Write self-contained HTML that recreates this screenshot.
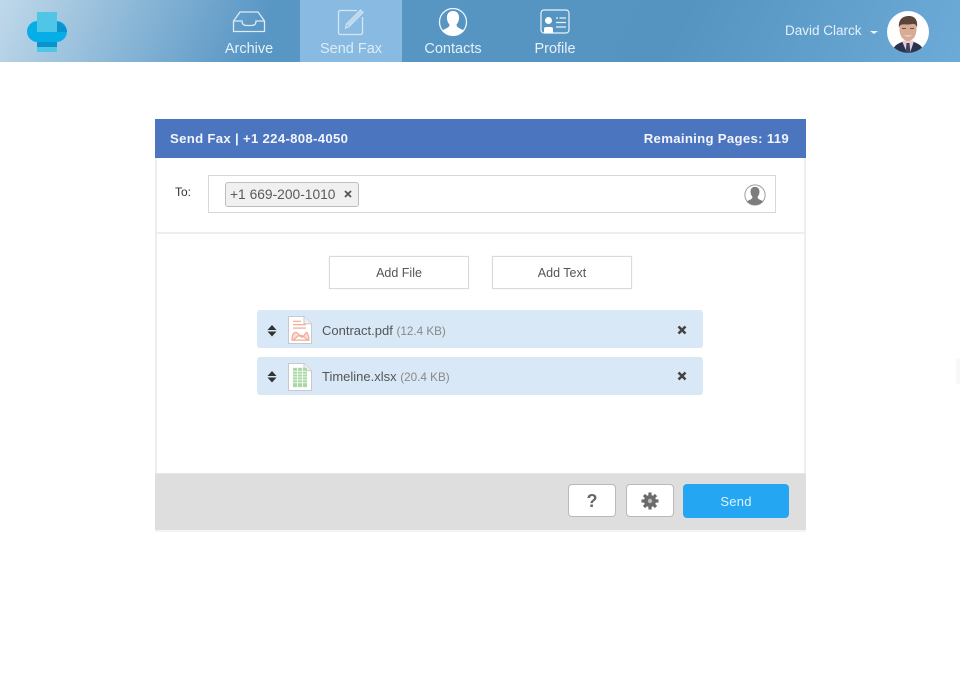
<!DOCTYPE html>
<html><head><meta charset="utf-8"><style>
html,body{margin:0;padding:0;background:#fff}
body{width:960px;height:685px;position:relative;overflow:hidden;font-family:"Liberation Sans",sans-serif}
.a{position:absolute}
.t{position:absolute;white-space:nowrap}
.nav{top:41px;font-size:14.5px;line-height:17px;color:#e6f0f8;text-align:center;width:102px}
.btn{position:absolute;box-sizing:border-box;background:#fff;border:1px solid #dadada;box-shadow:0 0 1px #e4e4e4;text-align:center;font-size:12.5px;color:#555;line-height:32px;height:33px;width:140px;top:256px}
.row{position:absolute;left:257px;width:446px;height:38px;background:#d8e8f6;border-radius:3px}
.fn{position:absolute;left:65px;top:13px;font-size:13px;line-height:15px;color:#555;white-space:nowrap}
.fn span{color:#888;font-size:11.7px}
.sb{position:absolute;box-sizing:border-box;width:48px;height:33px;top:484px;background:#fff;border:1px solid #b9b9b9;border-radius:4px}
</style></head><body>
<div class="a" style="left:0;top:0;width:960px;height:62px;background:linear-gradient(115deg,#c0d9ea 0%,#5896c4 28%,#5593c1 70%,#6caad8 100%)"></div>
<div class="a" style="left:300px;top:0;width:102px;height:62px;background:#89bbe2"></div>

<svg class="a" style="left:20px;top:5px" width="55" height="50" viewBox="0 0 55 50">
<rect x="7" y="16" width="40" height="21" rx="10.500" fill="#05aee6"/>
<path d="M37 17 C41 17.500 46 20 47 27 L37 27Z" fill="#0b93cf"/>
<rect x="17" y="37" width="20" height="5" fill="#0a93cb"/>
<rect x="17" y="42" width="20" height="5" fill="#4fc6e6"/>
<rect x="17" y="7" width="20" height="20" fill="#4fc6e6"/>
</svg>

<svg class="a" style="left:232px;top:10px" width="34" height="24" viewBox="0 0 34 24" fill="none" stroke="#dcebf5" stroke-width="1.300">
<path d="M1.500 11 L8 2 H26 L32.500 11 V21.500 H1.500Z"/><path d="M1.500 11 H10 C10 16 14 15.500 17 15.500 C20 15.500 24 16 24 11 H32.500"/>
</svg>
<div class="t nav" style="left:198px">Archive</div>

<svg class="a" style="left:336px;top:7px" width="30" height="30" viewBox="0 0 30 30" fill="none" stroke="#d5e6f4" stroke-width="1.300">
<path d="M21 3.500 H4.500 Q2.500 3.500 2.500 5.500 V25.500 Q2.500 27.500 4.500 27.500 H24.500 Q26.500 27.500 26.500 25.500 V10"/>
<path d="M9.500 21 L10.500 17 L24.500 3 L27 5.500 L13 19.500Z" fill="none" stroke-width="1.100"/>
<path d="M11 17.500 L25 3.500 L26.500 5 L12.500 19Z" fill="#d5e6f4" stroke="none" opacity=".7"/>
</svg>
<div class="t nav" style="left:300px;color:#dcecf8">Send Fax</div>

<svg class="a" style="left:438px;top:7px" width="30" height="30" viewBox="0 0 30 30">
<circle cx="15" cy="15" r="13.500" fill="none" stroke="#eef5fa" stroke-width="1.300"/>
<path d="M15 4 C20 4 21.500 8 21 12 C20.700 14.500 19.500 16.500 18.500 17.500 C18.500 20 20 20.500 24 22.500 Q25.500 23.500 26 24 C23 27 19.500 28.500 15 28.500 C10.500 28.500 7 27 4 24 Q4.500 23.500 6 22.500 C10 20.500 11.500 20 11.500 17.500 C10.500 16.500 9.300 14.500 9 12 C8.500 8 10 4 15 4Z" fill="#fff"/>
</svg>
<div class="t nav" style="left:402px">Contacts</div>

<svg class="a" style="left:540px;top:9px" width="30" height="25" viewBox="0 0 30 25" fill="none">
<rect x="1" y="1" width="28" height="23" rx="3" stroke="#eaf3f9" stroke-width="1.200"/>
<circle cx="8.500" cy="11.500" r="3.500" fill="#fff"/><path d="M4 24 V20 Q4 18 6 18 H11 Q13 18 13 20 V24Z" fill="#fff"/>
<path d="M16 9 H18M19.500 9 H26M16 13.500 H26M16 18 H26" stroke="#eaf3f9" stroke-width="1.200"/>
</svg>
<div class="t nav" style="left:504px">Profile</div>

<div class="t" style="left:785px;top:23px;font-size:13.500px;line-height:16px;color:#e6f0f8">David Clarck</div>
<div class="a" style="left:870px;top:31px;width:0;height:0;border-left:4px solid transparent;border-right:4px solid transparent;border-top:3px solid #f2f7fb"></div>

<svg class="a" style="left:887px;top:11px" width="42" height="42" viewBox="0 0 42 42">
<defs><clipPath id="c"><circle cx="21" cy="21" r="21"/></clipPath></defs>
<g clip-path="url(#c)">
<rect width="42" height="42" fill="#fff"/>
<path d="M5 42 C6 35 10 33 15 31 H27 C32 33 36 35 37 42Z" fill="#2a3350"/>
<path d="M15 30 L20 42 H23 L27 30 L21 29Z" fill="#e8ccd5"/>
<path d="M19.500 32 H22.500 L23.500 42 H18.500Z" fill="#3a4568"/>
<ellipse cx="21" cy="18.500" rx="8.500" ry="11.500" fill="#d9ab95"/>
<path d="M12 17 C11 8 16 5 22 5 C28 5 31 9 30 17 C29.500 14 28 12.500 25 13 C21 14 17 13 15 13.500 C13 14 12.500 15 12 17Z" fill="#5a4638"/>
<path d="M16.500 24 Q21 27 25.500 24 Q21 25.500 16.500 24Z" fill="#fff"/>
<path d="M15 17.500 H19M23 17.500 H27" stroke="#6b5040" stroke-width="1"/>
</g></svg>

<!-- Card -->
<div class="a" style="left:155px;top:158px;width:651px;height:372px;box-sizing:border-box;border-left:2px solid #eee;border-right:2px solid #eee"></div>
<div class="a" style="left:155px;top:119px;width:651px;height:39px;background:#4c75bf"></div>
<div class="t" style="left:170px;top:131px;font-size:13.200px;line-height:16px;font-weight:bold;color:#f1f5fb;letter-spacing:.3px">Send Fax | +1 224-808-4050</div>
<div class="t" style="right:171px;top:131px;font-size:13.200px;line-height:16px;font-weight:bold;color:#f1f5fb;letter-spacing:.3px">Remaining Pages: 119</div>

<div class="t" style="left:175px;top:185px;font-size:12px;line-height:14px;color:#333">To:</div>
<div class="a" style="left:208px;top:175px;width:568px;height:38px;box-sizing:border-box;border:1px solid #d8d8d8;background:#fff"></div>
<div class="a" style="left:225px;top:182px;width:134px;height:25px;box-sizing:border-box;border:1px solid #bdbdbd;border-radius:3px;background:#f0f0f0"></div>
<div class="t" style="left:230px;top:187px;font-size:13.800px;line-height:16px;color:#5a5a5a">+1 669-200-1010</div>
<svg class="a" style="left:344px;top:190px" width="8" height="8" viewBox="0 0 8 8"><path d="M1 1 L7 7 M7 1 L1 7" stroke="#555" stroke-width="1.800"/></svg>

<svg class="a" style="left:744px;top:184px" width="22" height="22" viewBox="0 0 30 30">
<circle cx="15" cy="15" r="13.800" fill="#fff" stroke="#9a9a9a" stroke-width="1.300"/>
<path d="M15 4 C20 4 21.500 8 21 12 C20.700 14.500 19.500 16.500 18.500 17.500 C18.500 20 20 20.500 24 22.500 Q25.500 23.500 26 24 C23 27 19.500 28.500 15 28.500 C10.500 28.500 7 27 4 24 Q4.500 23.500 6 22.500 C10 20.500 11.500 20 11.500 17.500 C10.500 16.500 9.300 14.500 9 12 C8.500 8 10 4 15 4Z" fill="#7d7d7d"/>
</svg>

<div class="a" style="left:157px;top:232px;width:647px;height:2px;background:#eee"></div>

<div class="btn" style="left:329px">Add File</div>
<div class="btn" style="left:492px">Add Text</div>

<div class="row" style="top:310px">
<svg class="a" style="left:10px;top:14.500px" width="10" height="12" viewBox="0 0 10 12"><path d="M5 0 L9.500 5 H.5Z M5 11.500 L9.500 6.500 H.5Z" fill="#333"/></svg>
<svg class="a" style="left:31px;top:6px" width="24" height="28" viewBox="0 0 24 29" preserveAspectRatio="none">
<path d="M.5 .5 H16 L23.500 8 V28.500 H.5Z" fill="#fff" stroke="#c9c9c9"/><path d="M16 .5 V8 H23.500" fill="#f0f0f0" stroke="#c9c9c9"/>
<path d="M5 5.500 H13M5 9 H18M5 12.500 H18" stroke="#f4b0a2" stroke-width="1.400"/>
<path d="M4 25 C4 19 6 17 8 17 C10 17 12 22 14 22 C16 22 17 17 19 17 C20 19 21 22 21 25 C18 25 16 20 12.500 20 C9 20 7 25 4 25Z" fill="#fbdcd5" stroke="#f0a898" stroke-width="1.200"/><path d="M4 25 H21" stroke="#f0a898" stroke-width="1.200"/>
</svg>
<div class="fn">Contract.pdf <span>(12.4 KB)</span></div>
<svg class="a" style="left:420px;top:15px" width="10" height="10" viewBox="0 0 10 10"><path d="M1.500 1.500 L8.500 8.500 M8.500 1.500 L1.500 8.500" stroke="#444" stroke-width="2.600"/></svg>
</div>

<div class="row" style="top:357px">
<svg class="a" style="left:10px;top:13.500px" width="10" height="12" viewBox="0 0 10 12"><path d="M5 0 L9.500 5 H.5Z M5 11.500 L9.500 6.500 H.5Z" fill="#333"/></svg>
<svg class="a" style="left:31px;top:6px" width="24" height="28" viewBox="0 0 24 29" preserveAspectRatio="none">
<path d="M.5 .5 H16 L23.500 8 V28.500 H.5Z" fill="#fff" stroke="#c9c9c9"/><path d="M16 .5 V8 H23.500" fill="#f0f0f0" stroke="#c9c9c9"/>
<rect x="5" y="5" width="14" height="20" fill="#a9d8a6"/>
<path d="M5 8.500 H19M5 11.500 H19M5 14.500 H19M5 17.500 H19M5 20.500 H19M9.500 5 V25M14.500 5 V25" stroke="#fff" stroke-width=".8"/>
</svg>
<div class="fn" style="top:12px">Timeline.xlsx <span>(20.4 KB)</span></div>
<svg class="a" style="left:420px;top:14px" width="10" height="10" viewBox="0 0 10 10"><path d="M1.500 1.500 L8.500 8.500 M8.500 1.500 L1.500 8.500" stroke="#444" stroke-width="2.600"/></svg>
</div>

<div class="a" style="left:155px;top:473px;width:651px;height:57px;box-sizing:border-box;background:#dedede;border-top:1px solid #e6e6e6"></div>
<div class="a" style="left:155px;top:530px;width:651px;height:2px;background:#f5f5f5"></div>

<div class="sb" style="left:568px"><div style="text-align:center;font-size:18px;font-weight:bold;line-height:33px;color:#666">?</div></div>
<div class="sb" style="left:626px">
<svg class="a" style="left:14px;top:7px" width="18" height="18" viewBox="0 0 18 18"><circle cx="9" cy="9" r="6" fill="#6b6b6b"/><circle cx="9" cy="9" r="2.200" fill="#bdbdbd"/><path d="M9 .5 V4M9 14 V17.500M.5 9 H4M14 9 H17.500M3 3 L5.500 5.500M12.500 12.500 L15 15M15 3 L12.500 5.500M5.500 12.500 L3 15" stroke="#6b6b6b" stroke-width="3.200"/></svg>
</div>
<div class="a" style="left:683px;top:484px;width:106px;height:34px;background:#24a6f2;border-radius:4px;text-align:center;color:#dff1fd;font-size:13px;line-height:35px;letter-spacing:.25px">Send</div>

<div class="a" style="left:956px;top:358px;width:4px;height:26px;background:#f8f8f8;border-radius:3px 0 0 3px"></div>
</body></html>
